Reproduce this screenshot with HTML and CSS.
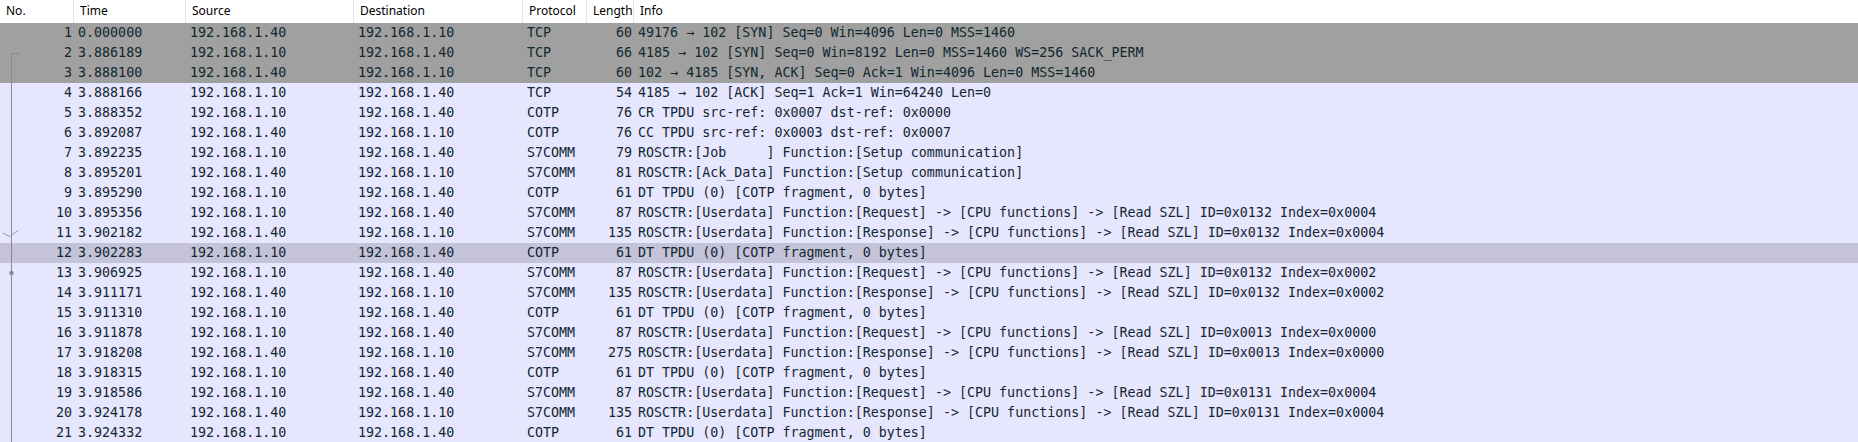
FILE: index.html
```html
<!DOCTYPE html>
<html>
<head>
<meta charset="utf-8">
<link rel="stylesheet" href="styles.css">
</head>
<body>
<div class="list">
  <div class="row head">
    <div class="c no">No.</div>
    <div class="c">Time</div>
    <div class="c">Source</div>
    <div class="c">Destination</div>
    <div class="c">Protocol</div>
    <div class="c">Length</div>
    <div class="c info">Info</div>
  </div>
  <div class="body">
    <svg class="tree" width="24" height="420" viewBox="0 0 24 420">
      <path d="M19.5 30.5 H11.5 V420" fill="none" stroke="#8a8a8e" stroke-width="1"/>
      <path d="M3 210 L9.5 213.5 L18 207.5" fill="none" stroke="#9a9aa0" stroke-width="1"/>
      <circle cx="11.5" cy="250" r="2.2" fill="#8a8a8e"/>
    </svg>
    <div class="row pkt sel"><div class="c no">1</div><div class="c">0.000000</div><div class="c">192.168.1.40</div><div class="c">192.168.1.10</div><div class="c">TCP</div><div class="c len">60</div><div class="c info">49176 → 102 [SYN] Seq=0 Win=4096 Len=0 MSS=1460</div></div>
    <div class="row pkt sel"><div class="c no">2</div><div class="c">3.886189</div><div class="c">192.168.1.10</div><div class="c">192.168.1.40</div><div class="c">TCP</div><div class="c len">66</div><div class="c info">4185 → 102 [SYN] Seq=0 Win=8192 Len=0 MSS=1460 WS=256 SACK_PERM</div></div>
    <div class="row pkt sel"><div class="c no">3</div><div class="c">3.888100</div><div class="c">192.168.1.40</div><div class="c">192.168.1.10</div><div class="c">TCP</div><div class="c len">60</div><div class="c info">102 → 4185 [SYN, ACK] Seq=0 Ack=1 Win=4096 Len=0 MSS=1460</div></div>
    <div class="row pkt"><div class="c no">4</div><div class="c">3.888166</div><div class="c">192.168.1.10</div><div class="c">192.168.1.40</div><div class="c">TCP</div><div class="c len">54</div><div class="c info">4185 → 102 [ACK] Seq=1 Ack=1 Win=64240 Len=0</div></div>
    <div class="row pkt"><div class="c no">5</div><div class="c">3.888352</div><div class="c">192.168.1.10</div><div class="c">192.168.1.40</div><div class="c">COTP</div><div class="c len">76</div><div class="c info">CR TPDU src-ref: 0x0007 dst-ref: 0x0000</div></div>
    <div class="row pkt"><div class="c no">6</div><div class="c">3.892087</div><div class="c">192.168.1.40</div><div class="c">192.168.1.10</div><div class="c">COTP</div><div class="c len">76</div><div class="c info">CC TPDU src-ref: 0x0003 dst-ref: 0x0007</div></div>
    <div class="row pkt"><div class="c no">7</div><div class="c">3.892235</div><div class="c">192.168.1.10</div><div class="c">192.168.1.40</div><div class="c">S7COMM</div><div class="c len">79</div><div class="c info">ROSCTR:[Job     ] Function:[Setup communication]</div></div>
    <div class="row pkt"><div class="c no">8</div><div class="c">3.895201</div><div class="c">192.168.1.40</div><div class="c">192.168.1.10</div><div class="c">S7COMM</div><div class="c len">81</div><div class="c info">ROSCTR:[Ack_Data] Function:[Setup communication]</div></div>
    <div class="row pkt"><div class="c no">9</div><div class="c">3.895290</div><div class="c">192.168.1.10</div><div class="c">192.168.1.40</div><div class="c">COTP</div><div class="c len">61</div><div class="c info">DT TPDU (0) [COTP fragment, 0 bytes]</div></div>
    <div class="row pkt"><div class="c no">10</div><div class="c">3.895356</div><div class="c">192.168.1.10</div><div class="c">192.168.1.40</div><div class="c">S7COMM</div><div class="c len">87</div><div class="c info">ROSCTR:[Userdata] Function:[Request] -&gt; [CPU functions] -&gt; [Read SZL] ID=0x0132 Index=0x0004</div></div>
    <div class="row pkt"><div class="c no">11</div><div class="c">3.902182</div><div class="c">192.168.1.40</div><div class="c">192.168.1.10</div><div class="c">S7COMM</div><div class="c len">135</div><div class="c info">ROSCTR:[Userdata] Function:[Response] -&gt; [CPU functions] -&gt; [Read SZL] ID=0x0132 Index=0x0004</div></div>
    <div class="row pkt cur"><div class="c no">12</div><div class="c">3.902283</div><div class="c">192.168.1.10</div><div class="c">192.168.1.40</div><div class="c">COTP</div><div class="c len">61</div><div class="c info">DT TPDU (0) [COTP fragment, 0 bytes]</div></div>
    <div class="row pkt"><div class="c no">13</div><div class="c">3.906925</div><div class="c">192.168.1.10</div><div class="c">192.168.1.40</div><div class="c">S7COMM</div><div class="c len">87</div><div class="c info">ROSCTR:[Userdata] Function:[Request] -&gt; [CPU functions] -&gt; [Read SZL] ID=0x0132 Index=0x0002</div></div>
    <div class="row pkt"><div class="c no">14</div><div class="c">3.911171</div><div class="c">192.168.1.40</div><div class="c">192.168.1.10</div><div class="c">S7COMM</div><div class="c len">135</div><div class="c info">ROSCTR:[Userdata] Function:[Response] -&gt; [CPU functions] -&gt; [Read SZL] ID=0x0132 Index=0x0002</div></div>
    <div class="row pkt"><div class="c no">15</div><div class="c">3.911310</div><div class="c">192.168.1.10</div><div class="c">192.168.1.40</div><div class="c">COTP</div><div class="c len">61</div><div class="c info">DT TPDU (0) [COTP fragment, 0 bytes]</div></div>
    <div class="row pkt"><div class="c no">16</div><div class="c">3.911878</div><div class="c">192.168.1.10</div><div class="c">192.168.1.40</div><div class="c">S7COMM</div><div class="c len">87</div><div class="c info">ROSCTR:[Userdata] Function:[Request] -&gt; [CPU functions] -&gt; [Read SZL] ID=0x0013 Index=0x0000</div></div>
    <div class="row pkt"><div class="c no">17</div><div class="c">3.918208</div><div class="c">192.168.1.40</div><div class="c">192.168.1.10</div><div class="c">S7COMM</div><div class="c len">275</div><div class="c info">ROSCTR:[Userdata] Function:[Response] -&gt; [CPU functions] -&gt; [Read SZL] ID=0x0013 Index=0x0000</div></div>
    <div class="row pkt"><div class="c no">18</div><div class="c">3.918315</div><div class="c">192.168.1.10</div><div class="c">192.168.1.40</div><div class="c">COTP</div><div class="c len">61</div><div class="c info">DT TPDU (0) [COTP fragment, 0 bytes]</div></div>
    <div class="row pkt"><div class="c no">19</div><div class="c">3.918586</div><div class="c">192.168.1.10</div><div class="c">192.168.1.40</div><div class="c">S7COMM</div><div class="c len">87</div><div class="c info">ROSCTR:[Userdata] Function:[Request] -&gt; [CPU functions] -&gt; [Read SZL] ID=0x0131 Index=0x0004</div></div>
    <div class="row pkt"><div class="c no">20</div><div class="c">3.924178</div><div class="c">192.168.1.40</div><div class="c">192.168.1.10</div><div class="c">S7COMM</div><div class="c len">135</div><div class="c info">ROSCTR:[Userdata] Function:[Response] -&gt; [CPU functions] -&gt; [Read SZL] ID=0x0131 Index=0x0004</div></div>
    <div class="row pkt"><div class="c no">21</div><div class="c">3.924332</div><div class="c">192.168.1.10</div><div class="c">192.168.1.40</div><div class="c">COTP</div><div class="c len">61</div><div class="c info">DT TPDU (0) [COTP fragment, 0 bytes]</div></div>
  </div>
</div>
</body>
</html>
```

FILE: styles.css
```css
html, body {
  margin: 0;
  padding: 0;
  background: #ffffff;
  overflow: hidden;
}
.list {
  width: 1858px;
  height: 442px;
  overflow: hidden;
}
.row {
  display: grid;
  grid-template-columns: 74px 112px 168px 169px 64px 47px 1fr;
  white-space: pre;
}
.head {
  height: 23px;
  background: #ffffff;
  font-family: "Noto Sans", "Open Sans", sans-serif;
  font-size: 12px;
  line-height: 22px;
  color: #000000;
}
.head .c {
  padding-left: 6px;
  border-right: 1px solid #e5e5e5;
}
.head .info {
  border-right: none;
}
.body {
  position: relative;
  border-left: 1px solid #a0a0a0;
  margin-left: 0;
}
.tree {
  position: absolute;
  left: -1px;
  top: 0;
}
.pkt {
  height: 20px;
  background: #e7e6ff;
  color: #12272e;
  font-family: "DejaVu Sans Mono", "Liberation Mono", monospace;
  font-size: 13.33px;
  line-height: 19px;
  margin-left: -1px;
}
.pkt .c {
  padding-left: 4px;
  overflow: hidden;
}
.pkt .no {
  text-align: right;
  padding-left: 0;
  padding-right: 2px;
}
.pkt .len {
  text-align: right;
  padding-left: 0;
  padding-right: 2px;
}
.pkt.sel {
  background: #a0a0a0;
}
.pkt.cur {
  background: #c5c3d9;
}
```
